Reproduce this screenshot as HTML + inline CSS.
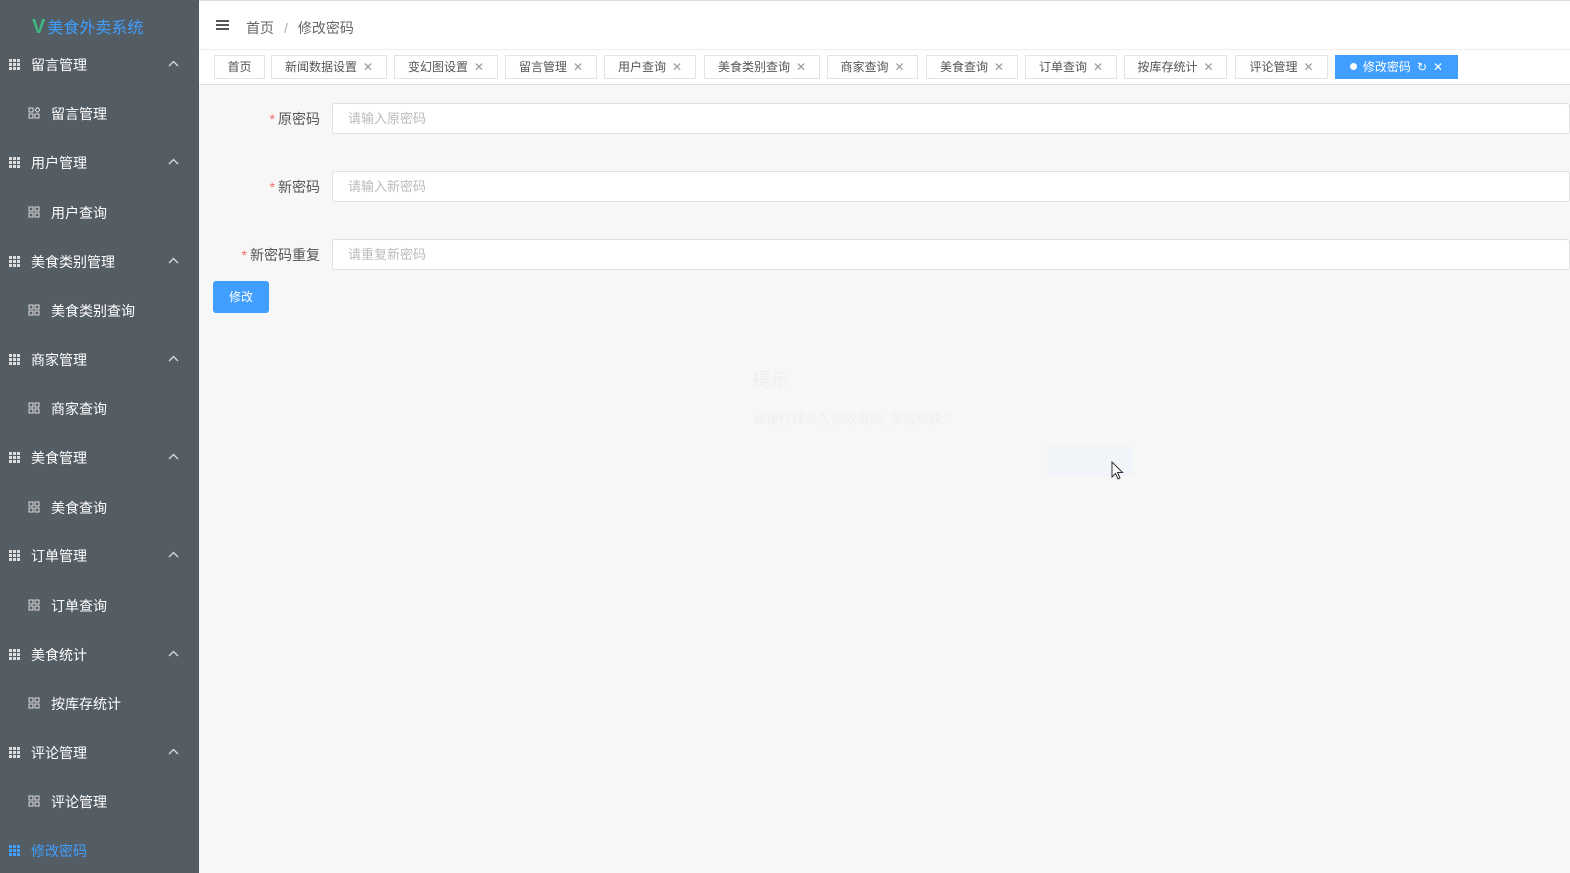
<!DOCTYPE html><html><head><meta charset="utf-8"><style>
*{margin:0;padding:0;box-sizing:border-box}
body{width:1570px;height:873px;overflow:hidden;font-family:"Liberation Sans","Noto Sans CJK SC",sans-serif;background:#f7f7f7;position:relative;font-size:13px}
.side{position:absolute;left:0;top:0;width:199px;height:873px;background:#545c64;color:#fff}
.logo{position:absolute;left:32px;top:14px;font-size:16px;color:#409eff}
.logo b{color:#41b883;font-size:20px;font-weight:bold;margin-right:2px}
.it{position:absolute;left:0;width:199px;font-size:14px;color:#fff;line-height:20px}
.it .g{position:absolute;left:9px;top:4px;width:11px;height:11px;background:
linear-gradient(#545c64,#545c64) 3px 0/1px 11px no-repeat,linear-gradient(#545c64,#545c64) 7px 0/1px 11px no-repeat,linear-gradient(#545c64,#545c64) 0 3px/11px 1px no-repeat,linear-gradient(#545c64,#545c64) 0 7px/11px 1px no-repeat,#ddd}
.it .t{position:absolute;left:31px;top:0}
.it .ar{position:absolute;left:168px;top:5px;width:11px;height:7px}
.sub .s{position:absolute;left:28px;top:3px;width:12px;height:12px}
.sub .t{left:51px}
.top{position:absolute;left:199px;top:0;right:0;height:50px;background:#fff;border-top:1px solid #ddd;border-bottom:1px solid #eee}
.bc{position:absolute;left:47px;top:17px;color:#666;font-size:14px}
.bc span{color:#aaa;margin:0 10px}
.ham{position:absolute;left:17px;top:19px;width:13px;height:10px;border-top:2px solid #555;border-bottom:2px solid #555}
.ham:after{content:"";position:absolute;left:0;top:2px;width:13px;height:2px;background:#555}
.tabs{position:absolute;left:199px;top:50px;right:0;height:35px;background:#fff;border-bottom:1px solid #ddd}
.tab{position:absolute;top:5px;height:24px;border:1px solid #e4e4e4;background:#fff;color:#555;font-size:12px;line-height:22px;text-align:center}
.tab i{font-style:normal;color:#999;margin-left:6px;font-size:12px}
.tab.on{background:#409eff;border-color:#409eff;color:#fff}
.tab.on i{color:#fff}
.lab{position:absolute;font-size:14px;color:#555;text-align:right;width:120px;left:200px}
.lab em{color:#f56c6c;font-style:normal;margin-right:3px}
.inp{position:absolute;left:332px;right:0;height:31px;background:#fff;border:1px solid #e0e0e0;border-radius:3px;color:#bbb;font-size:13px;line-height:29px;padding-left:15px}
.btn{position:absolute;left:213px;top:281px;width:56px;height:32px;background:#409eff;border-radius:3px;color:#fff;font-size:12px;line-height:32px;text-align:center}
</style></head><body>
<div class="side">
<div class="logo"><b>V</b>美食外卖系统</div>
<div class="it" style="top:55px"><span class="g"></span><span class="t">留言管理</span><svg class="ar" viewBox="0 0 11 7"><path d="M1 6 L5.5 1.5 L10 6" fill="none" stroke="#ddd" stroke-width="1.3"/></svg></div>
<div class="it sub" style="top:104px"><svg class="s" viewBox="0 0 12 12" fill="none" stroke="#ddd"><rect x="1" y="1" width="4" height="4"/><rect x="7" y="7" width="4" height="4"/><rect x="1" y="7" width="4" height="4"/><rect x="7.5" y="0.8" width="3.5" height="3.5" transform="rotate(45 9 3)"/></svg><span class="t">留言管理</span></div>
<div class="it" style="top:153px"><span class="g"></span><span class="t">用户管理</span><svg class="ar" viewBox="0 0 11 7"><path d="M1 6 L5.5 1.5 L10 6" fill="none" stroke="#ddd" stroke-width="1.3"/></svg></div>
<div class="it sub" style="top:203px"><svg class="s" viewBox="0 0 12 12" fill="none" stroke="#ddd"><rect x="1" y="1" width="4" height="4"/><rect x="7" y="7" width="4" height="4"/><rect x="1" y="7" width="4" height="4"/><rect x="7" y="1" width="4" height="4"/></svg><span class="t">用户查询</span></div>
<div class="it" style="top:252px"><span class="g"></span><span class="t">美食类别管理</span><svg class="ar" viewBox="0 0 11 7"><path d="M1 6 L5.5 1.5 L10 6" fill="none" stroke="#ddd" stroke-width="1.3"/></svg></div>
<div class="it sub" style="top:301px"><svg class="s" viewBox="0 0 12 12" fill="none" stroke="#ddd"><rect x="1" y="1" width="4" height="4"/><rect x="7" y="7" width="4" height="4"/><rect x="1" y="7" width="4" height="4"/><rect x="7" y="1" width="4" height="4"/></svg><span class="t">美食类别查询</span></div>
<div class="it" style="top:350px"><span class="g"></span><span class="t">商家管理</span><svg class="ar" viewBox="0 0 11 7"><path d="M1 6 L5.5 1.5 L10 6" fill="none" stroke="#ddd" stroke-width="1.3"/></svg></div>
<div class="it sub" style="top:399px"><svg class="s" viewBox="0 0 12 12" fill="none" stroke="#ddd"><rect x="1" y="1" width="4" height="4"/><rect x="7" y="7" width="4" height="4"/><rect x="1" y="7" width="4" height="4"/><rect x="7" y="1" width="4" height="4"/></svg><span class="t">商家查询</span></div>
<div class="it" style="top:448px"><span class="g"></span><span class="t">美食管理</span><svg class="ar" viewBox="0 0 11 7"><path d="M1 6 L5.5 1.5 L10 6" fill="none" stroke="#ddd" stroke-width="1.3"/></svg></div>
<div class="it sub" style="top:498px"><svg class="s" viewBox="0 0 12 12" fill="none" stroke="#ddd"><rect x="1" y="1" width="4" height="4"/><rect x="7" y="7" width="4" height="4"/><rect x="1" y="7" width="4" height="4"/><rect x="7" y="1" width="4" height="4"/></svg><span class="t">美食查询</span></div>
<div class="it" style="top:546px"><span class="g"></span><span class="t">订单管理</span><svg class="ar" viewBox="0 0 11 7"><path d="M1 6 L5.5 1.5 L10 6" fill="none" stroke="#ddd" stroke-width="1.3"/></svg></div>
<div class="it sub" style="top:596px"><svg class="s" viewBox="0 0 12 12" fill="none" stroke="#ddd"><rect x="1" y="1" width="4" height="4"/><rect x="7" y="7" width="4" height="4"/><rect x="1" y="7" width="4" height="4"/><rect x="7" y="1" width="4" height="4"/></svg><span class="t">订单查询</span></div>
<div class="it" style="top:645px"><span class="g"></span><span class="t">美食统计</span><svg class="ar" viewBox="0 0 11 7"><path d="M1 6 L5.5 1.5 L10 6" fill="none" stroke="#ddd" stroke-width="1.3"/></svg></div>
<div class="it sub" style="top:694px"><svg class="s" viewBox="0 0 12 12" fill="none" stroke="#ddd"><rect x="1" y="1" width="4" height="4"/><rect x="7" y="7" width="4" height="4"/><rect x="1" y="7" width="4" height="4"/><rect x="7" y="1" width="4" height="4"/></svg><span class="t">按库存统计</span></div>
<div class="it" style="top:743px"><span class="g"></span><span class="t">评论管理</span><svg class="ar" viewBox="0 0 11 7"><path d="M1 6 L5.5 1.5 L10 6" fill="none" stroke="#ddd" stroke-width="1.3"/></svg></div>
<div class="it sub" style="top:792px"><svg class="s" viewBox="0 0 12 12" fill="none" stroke="#ddd"><rect x="1" y="1" width="4" height="4"/><rect x="7" y="7" width="4" height="4"/><rect x="1" y="7" width="4" height="4"/><rect x="7" y="1" width="4" height="4"/></svg><span class="t">评论管理</span></div>
<div class="it" style="top:841px;color:#409eff"><span class="g" style="background-color:#409eff"></span><span class="t">修改密码</span></div>
</div>
<div class="top"><div class="ham"></div><div class="bc">首页<span>/</span>修改密码</div></div>
<div class="tabs">
<div class="tab" style="left:15px;width:51px">首页</div>
<div class="tab" style="left:72px;width:116px">新闻数据设置<i>✕</i></div>
<div class="tab" style="left:195px;width:104px">变幻图设置<i>✕</i></div>
<div class="tab" style="left:306px;width:92px">留言管理<i>✕</i></div>
<div class="tab" style="left:405px;width:92px">用户查询<i>✕</i></div>
<div class="tab" style="left:505px;width:116px">美食类别查询<i>✕</i></div>
<div class="tab" style="left:628px;width:91px">商家查询<i>✕</i></div>
<div class="tab" style="left:727px;width:92px">美食查询<i>✕</i></div>
<div class="tab" style="left:826px;width:92px">订单查询<i>✕</i></div>
<div class="tab" style="left:925px;width:103px">按库存统计<i>✕</i></div>
<div class="tab" style="left:1036px;width:93px">评论管理<i>✕</i></div>
<div class="tab on" style="left:1136px;width:123px"><span style="display:inline-block;width:7px;height:7px;border-radius:50%;background:#fff;margin-right:6px;vertical-align:1px"></span>修改密码<i>↻</i><i>✕</i></div>
</div>
<div class="lab" style="top:109px"><em>*</em>原密码</div>
<div class="inp" style="top:103px">请输入原密码</div>
<div class="lab" style="top:177px"><em>*</em>新密码</div>
<div class="inp" style="top:171px">请输入新密码</div>
<div class="lab" style="top:245px"><em>*</em>新密码重复</div>
<div class="inp" style="top:239px">请重复新密码</div>
<div class="btn">修改</div>
<div style="position:absolute;left:753px;top:366px;font-size:18px;color:#eeeeee">提示</div>
<div style="position:absolute;left:753px;top:408px;font-size:13px;color:#efefef">此操作将永久修改密码, 是否继续?</div>
<div style="position:absolute;left:1047px;top:446px;width:86px;height:30px;background:#f1f4f8;border-radius:3px"></div>
<svg style="position:absolute;left:1111px;top:461px" width="14" height="20" viewBox="0 0 14 20"><path d="M1 1 L1 16 L4.5 12.5 L7 18 L9 17 L6.5 11.5 L11.5 11.5 Z" fill="#fff" stroke="#333" stroke-width="1"/></svg>
</body></html>
